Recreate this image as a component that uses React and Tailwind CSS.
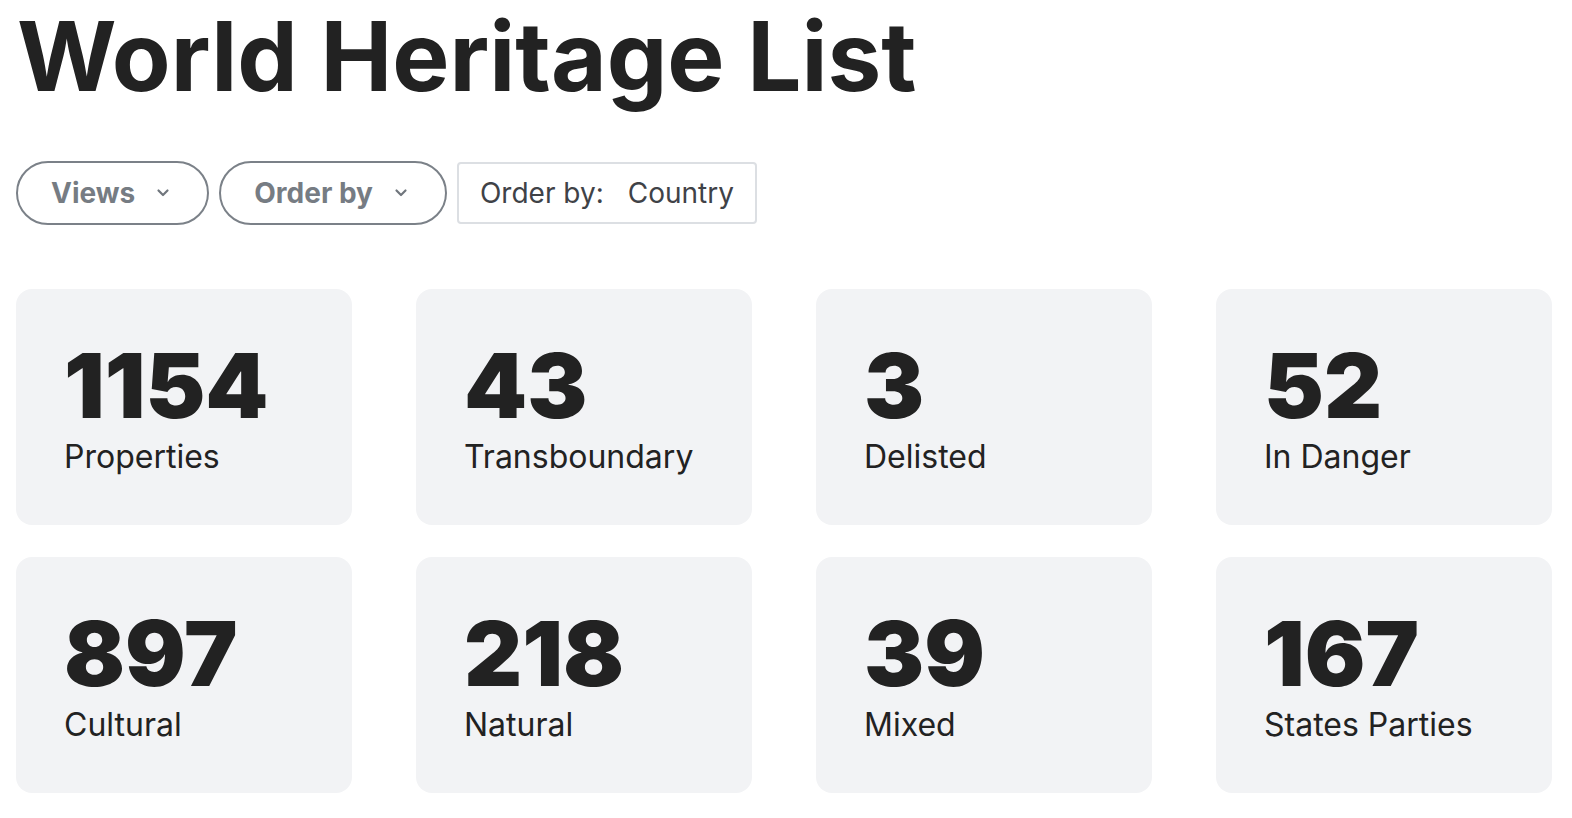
import React from "react";

const stats = [
  ["1154", "Properties"],
  ["43", "Transboundary"],
  ["3", "Delisted"],
  ["52", "In Danger"],
  ["897", "Cultural"],
  ["218", "Natural"],
  ["39", "Mixed"],
  ["167", "States Parties"],
];

function Chevron() {
  return (
    <svg width="14" height="10" viewBox="0 0 14 10" fill="none" className="ml-[21px]">
      <path d="M2.5 2.5l4.5 4.5 4.5-4.5" stroke="#70767d" strokeWidth="2.2" strokeLinecap="round" strokeLinejoin="round" />
    </svg>
  );
}

export default function App() {
  return (
    <div className="bg-white min-h-[818px] w-[1572px] px-4 pt-[8px] text-[#222222]" style={{ fontFamily: "Inter, 'Noto Sans', sans-serif" }}>
      <h1 className="text-[96px] font-bold leading-none ml-[1px]">World Heritage List</h1>
      <div className="flex items-center gap-[10px] mt-[57px]">
        <button className="h-[64px] pl-[33px] pr-[37px] rounded-full border-2 border-[#7b8188] flex items-center text-[28px] font-bold text-[#767c83]">
          Views
          <Chevron />
        </button>
        <button className="h-[64px] pl-[33px] pr-[37px] rounded-full border-2 border-[#7b8188] flex items-center text-[28px] font-bold text-[#767c83]">
          Order by
          <Chevron />
        </button>
        <div className="h-[62px] px-[21px] rounded-[4px] border-2 border-[#dcdfe3] flex items-center text-[28px] text-[#3f4247]">
          <span>Order by:</span>
          <span className="ml-[24px]">Country</span>
        </div>
      </div>
      <div className="grid grid-cols-[repeat(4,336px)] gap-x-[64px] gap-y-[32px] mt-[64px]">
        {stats.map(([n, l]) => (
          <div key={l} className="h-[236px] rounded-[16px] bg-[#f2f3f5] pl-[48px] pt-[52px]">
            <div className="text-[90px] font-black leading-none">{n}</div>
            <div className="text-[32px] leading-none mt-[10px]">{l}</div>
          </div>
        ))}
      </div>
    </div>
  );
}
